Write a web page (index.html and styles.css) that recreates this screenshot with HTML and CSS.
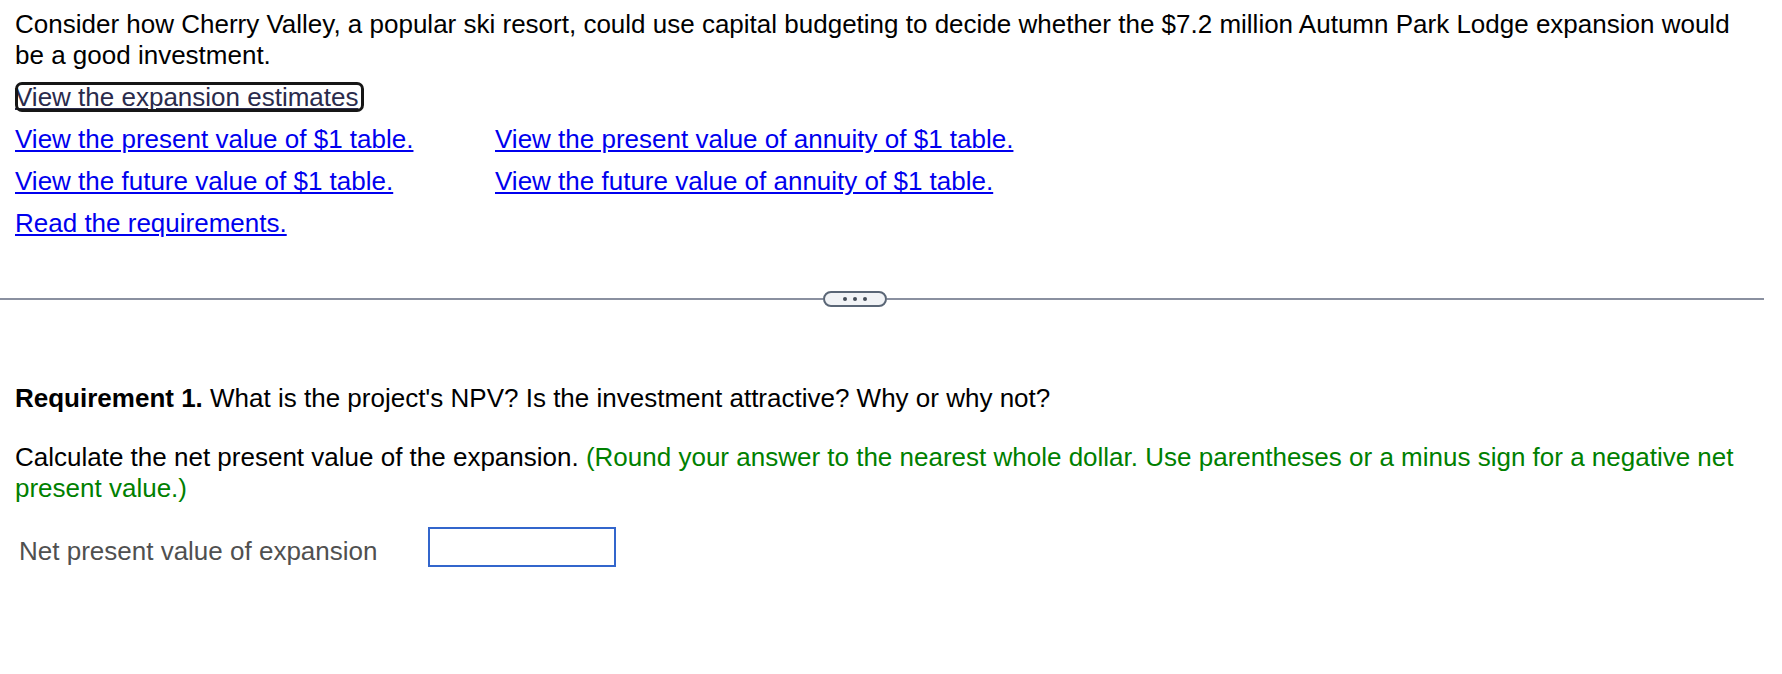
FILE: index.html
```html
<!DOCTYPE html>
<html lang="en">
<head>
  <meta charset="UTF-8" />
  <meta name="viewport" content="width=device-width, initial-scale=1.0"/>
  <title>Capital Budgeting - Cherry Valley</title>
  <link rel="stylesheet" href="styles.css">
</head>
<body>
  <div class="page">
    <p class="intro">Consider how Cherry Valley, a popular ski resort, could use capital budgeting to decide whether the $7.2 million Autumn Park Lodge expansion would be a good investment.</p>

    <div class="links">
      <div class="link-row">
        <a class="link focused" href="#">View the expansion estimates</a>
      </div>
      <div class="link-grid">
        <a class="link" href="#">View the present value of $1 table.</a>
        <a class="link" href="#">View the present value of annuity of $1 table.</a>
        <a class="link" href="#">View the future value of $1 table.</a>
        <a class="link" href="#">View the future value of annuity of $1 table.</a>
        <a class="link" href="#">Read the requirements.</a>
      </div>
    </div>
  </div>

  <div class="divider">
    <button class="pill" type="button" aria-label="More">
      <i></i><i></i><i></i>
    </button>
  </div>

  <div class="page question">
    <p class="req"><strong>Requirement 1.</strong> What is the project's NPV? Is the investment attractive? Why or why not?</p>
    <p>Calculate the net present value of the expansion. <span class="hint">(Round your answer to the nearest whole dollar. Use parentheses or a minus sign for a negative net present value.)</span></p>

    <div class="answer-row">
      <label class="answer-label" for="npv">Net present value of expansion</label>
      <input class="answer-input" id="npv" type="text">
    </div>
  </div>
</body>
</html>
```

FILE: styles.css
```css
body {
  margin: 0;
  font-family: "Liberation Sans", Arial, sans-serif;
  font-size: 26px;
  line-height: 31px;
  color: #000;
  background: #fff;
}
.page {
  padding: 0 18px 0 15px;
}
.intro {
  margin: 9px 0 0;
}
.links {
  margin-top: 5px;
  line-height: 42px;
}
.link {
  color: #0000ee;
}
.focused {
  padding-right: 5px;
  color: #2a2b4c;
  outline: 3px solid #161616;
  outline-offset: -3px;
  border-radius: 7px;
}
.link-grid {
  display: grid;
  grid-template-columns: 480px auto;
  justify-items: start;
}

/* collapsed section separator */
.divider {
  display: flex;
  align-items: center;
  height: 16px;
  margin: 47px 18px 0 0;
}
.divider::before,
.divider::after {
  content: "";
  height: 2px;
  background: #8a90a0;
}
.divider::before { flex: 0 0 823px; }
.divider::after { flex: 1; }
.pill {
  box-sizing: border-box;
  width: 64px;
  height: 16px;
  padding: 0;
  border: 2px solid #5a6676;
  border-radius: 8px;
  background: #f1f3f6;
  display: flex;
  align-items: center;
  justify-content: center;
  gap: 6px;
  cursor: pointer;
}
.pill i {
  width: 4px;
  height: 4px;
  border-radius: 50%;
  background: #454d59;
}

.question {
  padding-top: 76px;
}
.question p {
  margin: 0 0 26px;
}
.question .req {
  margin-bottom: 28px;
}
.hint {
  color: #008000;
}
.answer-row {
  display: flex;
  align-items: center;
  margin-top: -3px;
}
.answer-label {
  flex: 0 0 413px;
  box-sizing: border-box;
  padding-left: 4px;
  margin-top: 8px;
  color: #505050;
}
.answer-input {
  box-sizing: border-box;
  width: 188px;
  height: 40px;
  border: 2px solid #3366cc;
  font: inherit;
  padding: 0 6px;
}
```
